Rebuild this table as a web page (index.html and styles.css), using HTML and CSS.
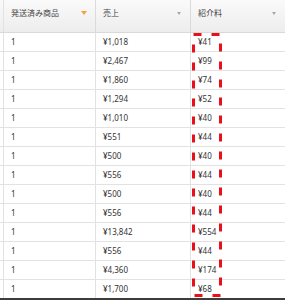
FILE: index.html
```html
<!DOCTYPE html>
<html lang="ja">
<head>
<meta charset="utf-8">
<link rel="stylesheet" href="styles.css">
</head>
<body>
<div class="page">
  <div class="table">
    <div class="row head">
      <div class="gutter"></div>
      <div class="cell"><span>発送済み商品</span><i class="tri tri-on"></i></div>
      <div class="cell"><span>売上</span><i class="tri"></i></div>
      <div class="cell"><span>紹介料</span><i class="tri"></i></div>
    </div>
    <div class="row"><div class="gutter"></div><div class="cell">1</div><div class="cell">¥1,018</div><div class="cell">¥41</div></div>
    <div class="row"><div class="gutter"></div><div class="cell">1</div><div class="cell">¥2,467</div><div class="cell">¥99</div></div>
    <div class="row"><div class="gutter"></div><div class="cell">1</div><div class="cell">¥1,860</div><div class="cell">¥74</div></div>
    <div class="row"><div class="gutter"></div><div class="cell">1</div><div class="cell">¥1,294</div><div class="cell">¥52</div></div>
    <div class="row"><div class="gutter"></div><div class="cell">1</div><div class="cell">¥1,010</div><div class="cell">¥40</div></div>
    <div class="row"><div class="gutter"></div><div class="cell">1</div><div class="cell">¥551</div><div class="cell">¥44</div></div>
    <div class="row"><div class="gutter"></div><div class="cell">1</div><div class="cell">¥500</div><div class="cell">¥40</div></div>
    <div class="row"><div class="gutter"></div><div class="cell">1</div><div class="cell">¥556</div><div class="cell">¥44</div></div>
    <div class="row"><div class="gutter"></div><div class="cell">1</div><div class="cell">¥500</div><div class="cell">¥40</div></div>
    <div class="row"><div class="gutter"></div><div class="cell">1</div><div class="cell">¥556</div><div class="cell">¥44</div></div>
    <div class="row"><div class="gutter"></div><div class="cell">1</div><div class="cell">¥13,842</div><div class="cell">¥554</div></div>
    <div class="row"><div class="gutter"></div><div class="cell">1</div><div class="cell">¥556</div><div class="cell">¥44</div></div>
    <div class="row"><div class="gutter"></div><div class="cell">1</div><div class="cell">¥4,360</div><div class="cell">¥174</div></div>
    <div class="row"><div class="gutter"></div><div class="cell">1</div><div class="cell">¥1,700</div><div class="cell">¥68</div></div>
  </div>
  <svg class="mark" width="285" height="300" viewBox="0 0 285 300">
    <rect x="193.5" y="34.5" width="27" height="261" fill="none" stroke="#e8101a" stroke-width="3" stroke-dasharray="8 10"/>
  </svg>
  <div class="bottom"></div>
</div>
</body>
</html>
```

FILE: styles.css
```css
html, body {
  margin: 0;
  padding: 0;
  background: #ffffff;
}
.page {
  position: relative;
  width: 285px;
  height: 300px;
  overflow: hidden;
  font-family: "Noto Sans", "Noto Sans CJK JP", sans-serif;
  font-size: 8px;
  color: #333333;
}
.table {
  display: flex;
  flex-direction: column;
}
.row {
  display: grid;
  grid-template-columns: 4px 92px 95px 94px;
  height: 18px;
  border-bottom: 1px solid #e2e2e2;
}
.row.head {
  height: 32px;
  border-top: 1px solid #e6e6e6;
  border-bottom: 1px solid #d9d9d9;
  background: linear-gradient(#fafafa, #ededed);
  margin-top: -1px;
}
.gutter {
  border-right: 1px solid #e2e2e2;
}
.cell {
  display: flex;
  align-items: center;
  padding-left: 7px;
  border-right: 1px solid #e2e2e2;
  line-height: 1;
}
.head .cell {
  align-items: flex-start;
  justify-content: space-between;
  padding: 9px 9px 0 7px;
  border-right-color: #dadada;
  color: #444444;
}
.row .cell:last-child {
  border-right: none;
}
.tri {
  display: block;
  width: 0;
  height: 0;
  margin-top: 3px;
  border-left: 2.5px solid transparent;
  border-right: 2.5px solid transparent;
  border-top: 3px solid #a8a8a8;
}
.tri-on {
  border-left-width: 3.5px;
  border-right-width: 3.5px;
  border-top: 4px solid #f2a33a;
  margin-top: 2px;
  margin-right: -1px;
}
.mark {
  position: absolute;
  left: 0;
  top: 0;
}
.bottom {
  position: absolute;
  left: 0;
  right: 0;
  bottom: 0;
  height: 2px;
  background: #3c3c3c;
}
```
